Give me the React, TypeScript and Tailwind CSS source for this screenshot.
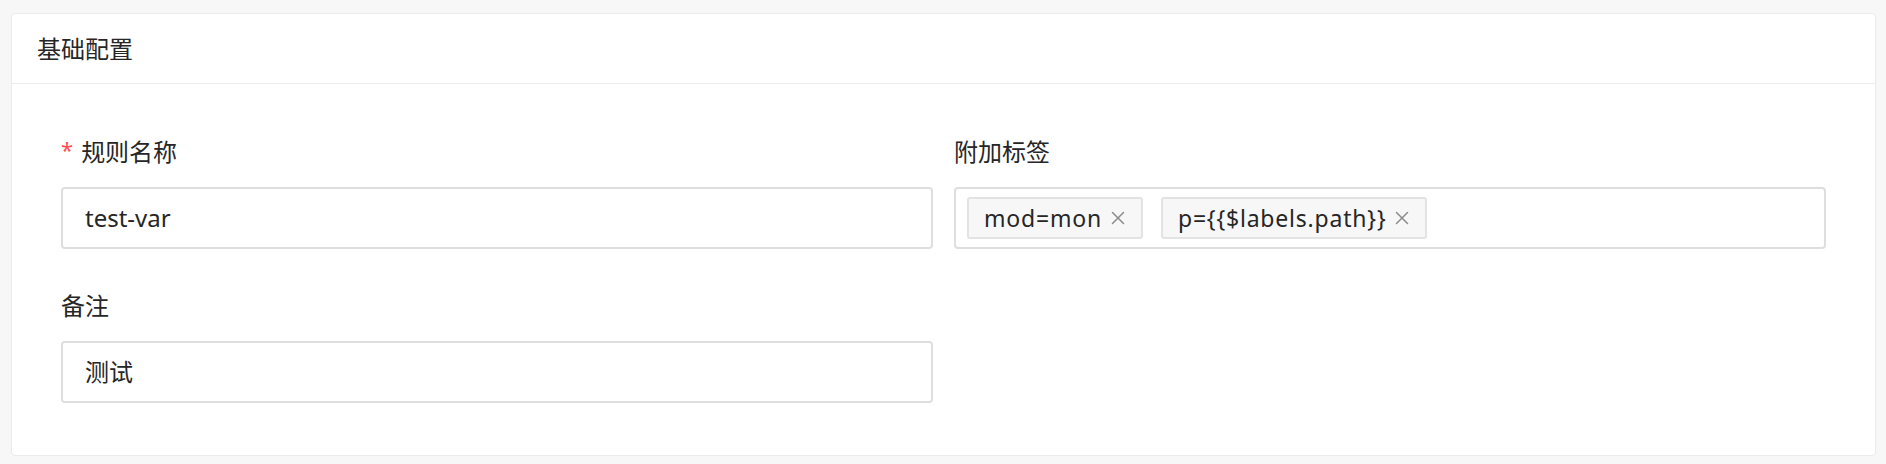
import React from 'react';

const font = "font-['Noto_Sans','Noto_Sans_CJK_SC',sans-serif]";

const CloseIcon = () => (
  <svg width="14" height="14" viewBox="0 0 14 14" className="shrink-0">
    <path d="M1.5 1.5 L12.5 12.5 M12.5 1.5 L1.5 12.5" stroke="#8c8c8c" strokeWidth="1.5" strokeLinecap="round" />
  </svg>
);

const Tag: React.FC<{ text: string }> = ({ text }) => (
  <div className="flex items-center h-[42px] pl-[15px] pr-[16px] gap-[9px] bg-[#f7f7f7] border-2 border-[#e3e3e3] rounded-[3px] text-[23px] text-[#262626]">
    <span className="leading-none tracking-[0.8px]">{text}</span>
    <CloseIcon />
  </div>
);

const Label: React.FC<{ text: string; required?: boolean }> = ({ text, required }) => (
  <div className="h-[30px] mb-[20px] flex items-center text-[24px] text-[#262626] leading-[30px]">
    {required && <span className="text-[#ff4d4f] mr-[8px] text-[22px] relative top-[-3px]">*</span>}
    <span>{text}</span>
  </div>
);

const Input: React.FC<{ value: string }> = ({ value }) => (
  <div className="h-[62px] border-2 border-[#dedede] rounded-[4px] px-[22px] flex items-center text-[24px] text-[#262626]">
    {value}
  </div>
);

const App: React.FC = () => {
  return (
    <div className={`min-h-screen bg-[#f7f7f7] pt-[13px] pl-[11px] pr-[10px] pb-[7px] ${font}`}>
      <div className="bg-white border border-[#ebebeb] rounded-[4px]">
        {/* header */}
        <div className="h-[70px] px-[25px] flex items-center border-b border-[#ececec] text-[24px] text-[#262626]">
          基础配置
        </div>

        {/* body */}
        <div className="pt-[53px] pb-[52px] px-[49px] grid grid-cols-2 gap-x-[21px] gap-y-[42px]">
          <div>
            <Label text="规则名称" required />
            <Input value="test-var" />
          </div>
          <div>
            <Label text="附加标签" />
            <div className="h-[62px] border-2 border-[#dedede] rounded-[4px] pl-[11px] flex items-center gap-[18px]">
              <Tag text="mod=mon" />
              <Tag text="p={{$labels.path}}" />
            </div>
          </div>
          <div>
            <Label text="备注" />
            <Input value="测试" />
          </div>
          <div />
        </div>
      </div>
    </div>
  );
};

export default App;
